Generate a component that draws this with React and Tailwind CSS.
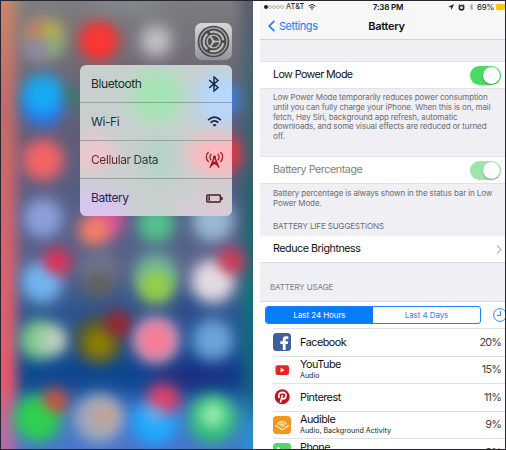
import React from "react";

const blobs = [
  [43, 38, 21, "#9c8c7c"], [37, 32, 9, "#d07860"], [51, 33, 10, "#bcb83c"], [52, 46, 9, "#80b488"], [35, 50, 10, "#8c88b0"],
  [99, 41, 17, "#ff2c2c"], [99, 41, 13, "#fa3a36"], [156, 41, 14, "#c4c2c8"],
  [43, 106, 19, "#2a74f4"], [43, 95, 19, "#14aef4"],
  [75, 97, 9, "#3a7a70"],
  [224, 99, 15, "#3a80e0"], [222, 154, 18, "#f03440"],
  [43, 160, 19, "#fc6464"],
  [43, 218, 18, "#90a2dc"],
  [108, 220, 15, "#e0509c"], [95, 230, 15, "#f88068"],
  [156, 224, 17, "#54c48c"], [213, 221, 19, "#9cbcd4"],
  [42, 282, 19, "#74b8f4"], [57, 262, 12, "#ec2c50"],
  [99, 270, 18, "#70758c"], [99, 284, 13, "#60605c"],
  [156, 275, 20, "#70b8a0"], [156, 286, 16, "#98d044"],
  [213, 281, 20, "#e8e0e6"], [231, 261, 12, "#d83854"],
  [39, 340, 18, "#84d08c"], [53, 340, 13, "#c4d0c4"],
  [99, 340, 22, "#5c5830"], [99, 343, 14, "#8e8400"], [118, 324, 12, "#a0242c"],
  [156, 340, 22, "#c49cc0"], [156, 340, 16, "#ff7890"],
  [213, 340, 19, "#70a6dc"],
  [38, 418, 22, "#2cd44c"], [55, 401, 11, "#dc4c38"],
  [99, 418, 23, "#a4acbc"], [104, 416, 12, "#c8a490"],
  [155, 422, 21, "#1cacff"], [163, 400, 15, "#e83c64"], [155, 414, 8, "#78b8f0"],
  [213, 419, 23, "#2cbe74"], [213, 415, 13, "#9cecb0"],
];

function Wallpaper() {
  return (
    <svg className="absolute inset-0" width="252" height="448" viewBox="0 0 252 448">
      <defs>
        <linearGradient id="main" x1="0" y1="0" x2="0" y2="1">
          <stop offset="0" stopColor="#7c7e80" />
          <stop offset=".14" stopColor="#706a76" />
          <stop offset=".3" stopColor="#5e5c78" />
          <stop offset=".48" stopColor="#505e88" />
          <stop offset=".6" stopColor="#56608a" />
          <stop offset=".7" stopColor="#285490" />
          <stop offset=".83" stopColor="#0a4690" />
          <stop offset=".86" stopColor="#124c98" />
          <stop offset=".92" stopColor="#4074cc" />
          <stop offset="1" stopColor="#4874cc" />
        </linearGradient>
        <linearGradient id="left" x1="0" y1="0" x2="0" y2="1">
          <stop offset="0" stopColor="#c88c68" />
          <stop offset=".25" stopColor="#c46c68" />
          <stop offset=".6" stopColor="#dc606c" />
          <stop offset=".83" stopColor="#ea586c" />
          <stop offset=".91" stopColor="#b86aa8" />
          <stop offset="1" stopColor="#b468a8" />
        </linearGradient>
        <linearGradient id="right" x1="0" y1="0" x2="0" y2="1">
          <stop offset="0" stopColor="#605868" />
          <stop offset=".14" stopColor="#4c6470" />
          <stop offset=".45" stopColor="#2c606c" />
          <stop offset=".65" stopColor="#107078" />
          <stop offset=".83" stopColor="#186080" />
          <stop offset=".92" stopColor="#2a90d0" />
          <stop offset="1" stopColor="#2a8ccc" />
        </linearGradient>
        <filter id="edge" filterUnits="userSpaceOnUse" x="-40" y="-30" width="340" height="510" colorInterpolationFilters="sRGB"><feGaussianBlur stdDeviation="6.5" /></filter>
        <filter id="soft" filterUnits="userSpaceOnUse" x="-40" y="-30" width="340" height="510" colorInterpolationFilters="sRGB"><feGaussianBlur stdDeviation="6.5" /></filter>
        <filter id="wide" filterUnits="userSpaceOnUse" x="-40" y="-30" width="340" height="510" colorInterpolationFilters="sRGB"><feGaussianBlur stdDeviation="10" /></filter>
      </defs>
      <rect width="252" height="448" fill="url(#main)" />
      <rect x="-30" y="-20" width="46" height="490" fill="url(#left)" filter="url(#edge)" />
      <rect x="240" y="-20" width="42" height="490" fill="url(#right)" filter="url(#edge)" />
      <ellipse cx="125" cy="2" rx="40" ry="8" fill="#848e94" filter="url(#wide)" />
      <ellipse cx="195" cy="374" rx="45" ry="14" fill="#1c2c80" filter="url(#wide)" />
      <ellipse cx="187" cy="308" rx="14" ry="14" fill="#284488" filter="url(#wide)" />
      <g filter="url(#wide)" opacity=".35">
        {blobs.map(([x, y, r, c], i) => <circle key={i} cx={x - 1} cy={y - 1} r={r + 4} fill={c} />)}
      </g>
      {blobs.map(([x, y, r, c], i) => <circle key={i} cx={x - 1} cy={y - 1} r={r} fill={c} opacity=".94" filter="url(#soft)" />)}
    </svg>
  );
}

function SettingsIcon() {
  return (
    <svg width="37" height="37" viewBox="0 0 37 37">
      <defs>
        <linearGradient id="metal" x1="0" y1="0" x2="0" y2="1">
          <stop offset="0" stopColor="#d8d8da" /><stop offset="1" stopColor="#949498" />
        </linearGradient>
      </defs>
      <rect width="37" height="37" rx="6.5" fill="url(#metal)" />
      <circle cx="18.5" cy="18.5" r="15.8" fill="#4a4a4c" />
      <circle cx="18.5" cy="18.5" r="13.5" fill="none" stroke="#a4a4a6" strokeWidth="1.4" />
      <circle cx="18.5" cy="18.5" r="9.8" fill="none" stroke="#b8b8ba" strokeWidth="2.2" strokeDasharray="17.5 3.02" transform="rotate(8 18.5 18.5)" />
      <circle cx="18.5" cy="18.5" r="6.4" fill="#505052" stroke="#b8b8ba" strokeWidth="1.4" />
      <path d="M18.5 18.5h7M18.5 18.5l-3.5-6M18.5 18.5l-3.500 6" stroke="#c4c4c6" strokeWidth="1.6" />
      <circle cx="18.5" cy="18.5" r="1.5" fill="#c4c4c6" />
    </svg>
  );
}

const Bluetooth = ({ className, w = 1.5 }) => (
  <svg className={className} viewBox="0 0 12 16" fill="none" stroke="currentColor" strokeWidth={w}>
    <path d="M1.2 4.2 10 11.5 6 15V1l4 3.5-8.8 7.3" />
  </svg>
);
const Wifi = ({ className }) => (
  <svg className={className} viewBox="0 0 16 12" fill="none" stroke="currentColor" strokeWidth="1.8">
    <path d="M1 4.4Q8-2 15 4.4M3.7 7.2Q8 3.4 12.3 7.2" />
    <path d="M8 11.8 5.8 9.6Q8 7.9 10.2 9.6z" fill="currentColor" stroke="none" />
  </svg>
);
const Tower = () => (
  <svg className="h-[18px] w-[19px]" viewBox="0 0 19 18" fill="none" stroke="currentColor" strokeWidth="1.2">
    <path d="M3.6 1Q-1 5.5 3.6 11M15.4 1Q20 5.5 15.4 11M6.3 2.8Q3.5 6 6.3 9.4M12.7 2.8Q15.5 6 12.7 9.4" />
    <path d="M9.5 6 5 16.8M9.5 6 14 16.8M7.7 10.6 13 14.6M11.3 10.6 6 14.6M7.5 11.5H11.5" strokeWidth="1.4" />
    <circle cx="9.5" cy="6" r="1.6" fill="currentColor" stroke="none" />
  </svg>
);
const LowBattery = () => (
  <svg className="h-[9px] w-[17px]" viewBox="0 0 17 9" fill="none" stroke="currentColor" strokeWidth="1.5">
    <rect x=".8" y=".9" width="13.6" height="7.2" rx="1" />
    <path d="M3.2 2.3v4.4M15.9 3v3" />
  </svg>
);

const shortcuts = [
  { label: "Bluetooth", tone: "text-[#183020]", iconTone: "text-[#182c50]", icon: <Bluetooth className="h-4 w-3" /> },
  { label: "Wi-Fi", tone: "text-[#26303c]", iconTone: "text-[#1c2450]", icon: <Wifi className="h-[11px] w-[15px]" /> },
  { label: "Cellular Data", tone: "bg-gradient-to-r from-[#701828] to-[#203830] bg-clip-text text-transparent", iconTone: "text-[#a81420]", icon: <Tower /> },
  { label: "Battery", tone: "text-[#28245c]", iconTone: "text-[#501828]", icon: <LowBattery /> },
];

function HomeScreen() {
  return (
    <section className="relative h-[448px] w-[252px] shrink-0 overflow-hidden">
      <Wallpaper />
      <div className="absolute left-[194px] top-[22px]"><SettingsIcon /></div>
      <div className="absolute left-[79px] top-[64px] h-[151px] w-[152px] overflow-hidden rounded-[6px] bg-[#c8d0cf]">
        <svg className="absolute inset-0" width="152" height="151">
          <g filter="url(#menu)">
            <circle cx="77" cy="32" r="27" fill="#a4e4b4" />
            <ellipse cx="142" cy="34" rx="28" ry="26" fill="#b6d6fc" />
            <ellipse cx="138" cy="90" rx="32" ry="21" fill="#ffb8c0" />
            <ellipse cx="14" cy="88" rx="24" ry="20" fill="#ecc6ce" />
            <circle cx="80" cy="94" r="20" fill="#b4d2c8" />
            <ellipse cx="16" cy="146" rx="30" ry="24" fill="#d8c4ee" />
            <ellipse cx="132" cy="146" rx="40" ry="20" fill="#d8ccd4" />
          </g>
          <defs><filter id="menu" x="-30%" y="-30%" width="160%" height="160%" colorInterpolationFilters="sRGB"><feGaussianBlur stdDeviation="9" /></filter></defs>
        </svg>
        <ul className="relative">
          {shortcuts.map((s, i) => (
            <li key={s.label} className={"flex h-[38px] items-center justify-between pl-[11px] text-[12px] tracking-[-0.4px] " + (i < 3 ? "border-b border-[#60787080]" : "")}>
              <span className={s.tone}>{s.label}</span>
              <span className={"flex w-[36px] justify-center " + s.iconTone}>{s.icon}</span>
            </li>
          ))}
        </ul>
      </div>
    </section>
  );
}

function Toggle({ dim }) {
  return (
    <span className={"flex h-[19px] w-[31px] shrink-0 justify-end rounded-full p-px " + (dim ? "bg-[#9de5ad]" : "bg-[#4cd964]")}>
      <span className="h-[17px] w-[17px] rounded-full bg-white shadow-[0_1px_2px_rgba(0,0,0,0.3)]" />
    </span>
  );
}

const FacebookIcon = () => (
  <svg width="18" height="18" viewBox="0 0 18 18">
    <rect width="18" height="18" rx="3.5" fill="#3f5f9f" />
    <path d="M9.8 17v-6H7.3V8.2h2.5V6.5Q9.8 3.2 13 3.2h2.3v2.7h-1.6q-1.1 0-1.1 1.1v1.2h2.6l-.4 2.8h-2.2v6z" fill="#fff" />
  </svg>
);
const YouTubeIcon = () => (
  <svg width="18" height="18" viewBox="0 0 18 18">
    <rect x=".5" y=".5" width="17" height="17" rx="4" fill="#fff" stroke="#f0f0f0" />
    <rect x="2.5" y="4.2" width="13.5" height="9.8" rx="2" fill="#e62420" />
    <path d="M7.6 6.8v4.6l4-2.3z" fill="#fff" />
  </svg>
);
const PinterestIcon = () => (
  <svg width="18" height="18" viewBox="0 0 18 18">
    <rect x=".5" y=".5" width="17" height="17" rx="4" fill="#fff" stroke="#f4f4f4" />
    <circle cx="9.2" cy="8.7" r="7.5" fill="#bd1522" />
    <path d="M6.3 10Q4.3 4.8 9.4 4.4q4 0 3.6 3.6-.6 3.2-3.2 2.8-.9-.2-1.2-1M9.5 6.9 7.4 14.5" fill="none" stroke="#fff" strokeWidth="1.6" />
  </svg>
);
const AudibleIcon = () => (
  <svg width="18" height="18" viewBox="0 0 18 18">
    <rect width="18" height="18" rx="3.5" fill="#f7941c" />
    <path d="M2 9.3 9 13.7l7-4.4M4.3 8.3Q9 2.3 13.7 8.3M6.3 9.3q3-3.2 5.2.3M8 10.3q1.2-1 2 .2" fill="none" stroke="#fff1c8" strokeWidth="1.3" />
  </svg>
);
const PhoneIcon = () => (
  <svg width="18" height="18" viewBox="0 0 18 18">
    <rect width="18" height="18" rx="3.5" fill="#4fd96c" />
    <path d="M5.4 3.5Q3 5 4.3 8q2 4.400 6 6.300 2.600 1 4-1.200l-2.400-2.200-1.700 1Q7.600 10.400 6.500 7.800l1.300-1.400z" fill="#fff" />
  </svg>
);

const usage = [
  { name: "Facebook", pct: "20%", icon: <FacebookIcon /> },
  { name: "YouTube", sub: "Audio", pct: "15%", icon: <YouTubeIcon /> },
  { name: "Pinterest", pct: "11%", icon: <PinterestIcon /> },
  { name: "Audible", sub: "Audio, Background Activity", pct: "9%", icon: <AudibleIcon /> },
  { name: "Phone", sub: "Audio", pct: "8%", icon: <PhoneIcon /> },
];

function BatterySettings() {
  return (
    <section className="flex h-[448px] w-[245px] flex-col overflow-hidden whitespace-nowrap bg-[#efeff4] text-[#101010]">
      <header className="h-[39px] shrink-0 border-b border-[#d0d0d6] bg-[#f7f7f7]">
        <div className="grid h-[11px] grid-cols-3 items-center">
          <div className="flex items-center pl-[4px]">
            <span className="mr-[2px] flex">
              <i className="h-[4px] w-[4px] rounded-full bg-[#222]" />
              {[1, 2, 3, 4].map((n) => <i key={n} className="h-[4px] w-[4px] rounded-full border border-[#bbb]" />)}
            </span>
            <span className="text-[7.5px]">AT&amp;T</span>
            <Wifi className="ml-[4px] h-[6px] w-[8px]" />
          </div>
          <span className="pl-[11px] text-center text-[8px] font-semibold tracking-[-0.2px]">7:38 PM</span>
          <div className="flex items-center justify-end">
            <svg width="6" height="6" viewBox="0 0 6 6"><path d="M0 3 6 0 3.5 6 3 3.2z" fill="#222" /></svg>
            <svg className="ml-[4px]" width="7" height="7" viewBox="0 0 7 7">
              <circle cx="3.5" cy="3.7" r="2.2" fill="none" stroke="#222" strokeWidth="1.6" />
              <path d="M.6 1.5 1.8.5M6.4 1.5 5.2.5" stroke="#222" />
            </svg>
            <Bluetooth className="ml-[4px] h-[8px] w-[5px] text-[#888]" />
            <span className="ml-[3px] text-[8px] tracking-[-0.3px]">69%</span>
            <span className="ml-[2px] h-[6px] w-[9px] rounded-l-[1px] bg-[#fdc70c]" />
          </div>
        </div>
        <div className="grid h-[27px] grid-cols-[1fr_auto_1fr] items-center">
          <span className="flex items-center gap-[4px] pl-[8px] text-[11px] tracking-[-0.45px] text-[#1a7ff5]">
            <svg width="7" height="12" viewBox="0 0 7 12"><path d="M6.4.8 1.2 6 6.4 11.2" fill="none" stroke="currentColor" strokeWidth="1.7" /></svg>
            <span className="pt-px">Settings</span>
          </span>
          <span className="pl-[8px] pt-px text-[11px] font-semibold tracking-[-0.3px]">Battery</span>
          <span />
        </div>
      </header>
      <div className="mt-[21px] flex h-[28px] shrink-0 items-center justify-between border-y border-[#e2e2e8] bg-white pl-[13px] pr-[4px]">
        <span className="pt-px text-[10.7px] tracking-[-0.58px]">Low Power Mode</span>
        <Toggle />
      </div>
      <p className="h-[67px] shrink-0 pl-[13px] pt-[4px] text-[8px] leading-[9.75px] tracking-[-0.12px] text-[#6d6d72]">
        Low Power Mode temporarily reduces power consumption<br />
        until you can fully charge your iPhone. When this is on, mail<br />
        fetch, Hey Siri, background app refresh, automatic<br />
        downloads, and some visual effects are reduced or turned<br />
        off.
      </p>
      <div className="flex h-[28px] shrink-0 items-center justify-between border-y border-[#e2e2e8] bg-white pl-[13px] pr-[4px]">
        <span className="pt-px text-[10.7px] tracking-[-0.42px] text-[#808080]">Battery Percentage</span>
        <Toggle dim />
      </div>
      <p className="h-[37px] shrink-0 pl-[13px] pt-[5px] text-[8px] leading-[9.75px] tracking-[-0.12px] text-[#6d6d72]">
        Battery percentage is always shown in the status bar in Low<br />
        Power Mode.
      </p>
      <h2 className="h-[15px] shrink-0 pl-[13px] text-[8px] leading-[10px] tracking-[-0.12px] text-[#6d6d72]">BATTERY LIFE SUGGESTIONS</h2>
      <div className="flex h-[27px] shrink-0 items-center justify-between border-b border-[#dcdce2] bg-white pl-[13px] pr-[3px]">
        <span className="pt-px text-[10.7px] tracking-[-0.45px]">Reduce Brightness</span>
        <svg width="6" height="9" viewBox="0 0 6 9"><path d="m1 .5 4 4-4 4" fill="none" stroke="#bbbbc0" strokeWidth="1.3" /></svg>
      </div>
      <h2 className="h-[39px] shrink-0 border-b border-[#d8d8de] pl-[10px] pt-[19px] text-[8px] leading-[10px] tracking-[-0.15px] text-[#808086]">BATTERY USAGE</h2>
      <div className="flex h-[26px] shrink-0 items-center bg-white pl-[5px]">
        <div className="grid h-[18px] w-[216px] shrink-0 grid-cols-2 overflow-hidden rounded-[3px] border border-[#1a82fb] text-center text-[8px] leading-[16px] tracking-[-0.08px]">
          <span className="bg-[#087cff] text-white">Last 24 Hours</span>
          <span className="text-[#1a82fb]">Last 4 Days</span>
        </div>
        <svg className="ml-[12px] shrink-0" width="14" height="14" viewBox="0 0 14 14" fill="none" stroke="#2a88f4">
          <circle cx="7" cy="7" r="6.4" /><path d="M7.5 3v4.5H3.8" />
        </svg>
      </div>
      <ul className="h-[140px] bg-white pl-[13px]">
        {usage.map((u) => (
          <li key={u.name} className="flex h-[27.5px] items-center border-t border-[#e2e2e6] pr-[4px]">
            {u.icon}
            <div className="ml-[9px] flex-1">
              <div className={"text-[10.8px] leading-[12px] tracking-[-0.48px] " + (u.sub ? "" : "pt-px")}>{u.name}</div>
              {u.sub && <div className="text-[7.1px] leading-[9px] text-[#222]">{u.sub}</div>}
            </div>
            <span className="pt-px text-[10.8px] tracking-[-0.8px] text-[#444]">{u.pct}</span>
          </li>
        ))}
      </ul>
    </section>
  );
}

export default function App() {
  return (
    <main className="flex h-[450px] w-[506px] overflow-hidden border border-[#282430] bg-white font-['Inter','Liberation_Sans',sans-serif]">
      <HomeScreen />
      <div className="w-[7px] shrink-0 bg-white" />
      <BatterySettings />
    </main>
  );
}
